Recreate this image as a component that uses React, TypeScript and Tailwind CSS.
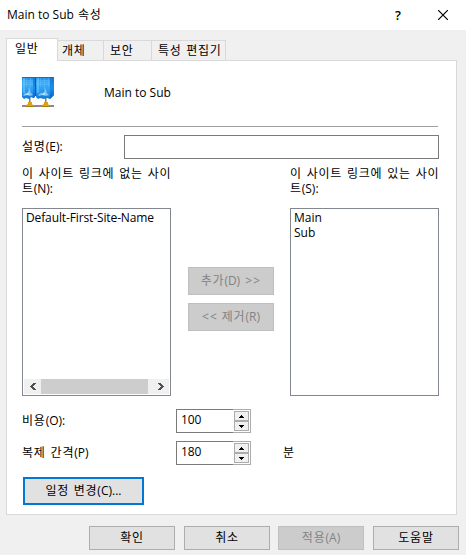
import type { ReactNode } from 'react';

function DialogButton({ children, className = '', disabled = false }: { children: ReactNode; className?: string; disabled?: boolean }) {
  return (
    <button
      disabled={disabled}
      className={`flex shrink-0 items-center justify-center whitespace-nowrap border ${
        disabled ? 'border-[#bfbfbf] bg-[#cccccc] text-[#838383]' : 'border-[#adadad] bg-[#e1e1e1] text-black'
      } ${className}`}
    >
      {children}
    </button>
  );
}

function SpinButton({ down = false }: { down?: boolean }) {
  return (
    <button className="flex h-[10px] w-[15px] items-center justify-center border border-[#acacac] bg-[#f0f0f0]">
      <svg width="5" height="3" viewBox="0 0 5 3" shapeRendering="crispEdges">
        <path d={down ? 'M0 0h5v1h-1v1h-1v1h-1v-1h-1v-1h-1z' : 'M0 3h5v-1h-1v-1h-1v-1h-1v1h-1v1h-1z'} fill="#000" />
      </svg>
    </button>
  );
}

function Spinner({ value }: { value: string }) {
  return (
    <div className="flex h-6 w-[75px] shrink-0 border border-[#7a7a7a]">
      <span className="w-[57px] pl-[4px] leading-[20px] tracking-[-0.1px]">{value}</span>
      <div className="-my-px -mr-px flex w-[18px] flex-col border border-l-0 border-[#acacac] bg-white py-px pl-px">
        <SpinButton />
        <SpinButton down />
      </div>
    </div>
  );
}

function SiteLinkIcon() {
  return (
    <svg className="shrink-0" width="32" height="31" viewBox="0 0 32 31">
      <defs>
        <linearGradient id="front" x1="0" y1="0" x2="0" y2="1">
          <stop offset="0" stopColor="#1c86e0" />
          <stop offset=".25" stopColor="#3fb0fa" />
          <stop offset=".6" stopColor="#2d9df2" />
          <stop offset="1" stopColor="#0b78d8" />
        </linearGradient>
        <linearGradient id="side" x1="0" y1="0" x2="0" y2="1">
          <stop offset="0" stopColor="#1676d4" />
          <stop offset=".5" stopColor="#1f8ceb" />
          <stop offset="1" stopColor="#0a5fc0" />
        </linearGradient>
      </defs>
      <rect x="0" y="28" width="32" height="2" fill="#8a8a8a" />
      <rect x="7" y="19" width="1.5" height="7" fill="#7f7f7f" />
      <rect x="23" y="19" width="1.5" height="7" fill="#7f7f7f" />
      <path d="M6 25h4v2l1 1v2H4v-2l2-1zM22 25h4v2l1 1v2h-7v-2l2-1z" fill="#dca217" />
      <path d="M4 29h7v1H4zM20 29h7v1h-7z" fill="#a97a14" />
      <path d="M0 0h13v20l-2 1-2-1-2 2-3-1-2 1-2-2z" fill="url(#front)" />
      <path d="M14 0h18v18l-2 2-2 2-3-1-3 1-4-1-2 1-2-2z" fill="url(#front)" />
      <path d="M11 0h2v20l-2 1zM28 0h4v18l-2 2-2 2z" fill="url(#side)" />
      <path d="M13 0h1v19h-1z" fill="#0c5ab0" />
      <path d="M0 0h32v1H0z" fill="#1470c6" />
      <path d="M1 3.5h10M1 7.5h10M15 3.5h13M15 7.5h13M4.5 1v9M8.5 1v9M18.500 1v9M22.500 1v9M26.500 1v9" stroke="#7bd0ff" strokeWidth=".8" opacity=".35" />
      <path d="M1 1h2v15H1zM15 1h2v15h-2z" fill="#6cc8ff" opacity=".6" />
      <path d="M7 10l1 3 1 3 2 2-3 1-3-1-3 1-1-1 3-3zM23 10l1 3 1 3 2 2-3 1-4-1-3 1-1-1 4-3z" fill="#86d2fc" opacity=".8" />
      <path d="M7 11l-1 4-3 2 2-4zM23 11l-1 4-3 2 2-4z" fill="#1673cc" opacity=".7" />
      <path d="M3 18l3-2 2 1-2 1zM19 18l3-2 2 1-2 1z" fill="#d3f0ff" opacity=".8" />
    </svg>
  );
}

function Chevron({ right = false }: { right?: boolean }) {
  return (
    <svg width="6" height="7" viewBox="0 0 6 7" shapeRendering="crispEdges">
      <path
        d="M3 0h3v1H5v1H4v1H3v1h1v1h1v1h1v1H3V6H2V5H1V4H0V3h1V2h1V1h1z"
        transform={right ? 'translate(6 0) scale(-1 1)' : undefined}
        fill="#505050"
      />
    </svg>
  );
}

export default function App() {
  return (
    <div className="flex h-[555px] w-[466px] flex-col overflow-hidden bg-[#f0f0f0] font-['Open_Sans','Noto_Sans_CJK_KR',sans-serif] text-[12px] leading-[15px] text-black">
      <header className="flex h-[30px] shrink-0 items-center bg-white pl-[7px]">
        <span className="w-[388px] whitespace-nowrap leading-[28px]">Main to Sub <span className="ml-px tracking-[0.8px]">속성</span></span>
        <span className="w-[43px] text-[13px] font-semibold leading-[28px]">?</span>
        <svg width="10" height="10" viewBox="0 0 10 10">
          <path d="M0 0l10 10M10 0L0 10" stroke="#000" strokeWidth="1.2" />
        </svg>
      </header>

      <nav className="ml-[6px] mt-2 flex h-[23px] shrink-0 items-end whitespace-nowrap tracking-[0.7px]">
        <div className="z-10 h-[23px] w-[52px] border border-b-0 border-[#d9d9d9] bg-white pl-2 leading-[20px]">일반</div>
        <div className="h-[21px] w-[46px] border border-l-0 border-[#d9d9d9] pl-[4px] leading-[19px]">개체</div>
        <div className="h-[21px] w-[48px] border border-l-0 border-[#d9d9d9] pl-[6px] leading-[19px]">보안</div>
        <div className="h-[21px] w-[74px] border border-l-0 border-[#d9d9d9] pl-[6px] leading-[19px] [word-spacing:1px]">특성 편집기</div>
      </nav>

      <main className="-mt-px ml-[6px] flex h-[455px] w-[451px] shrink-0 flex-col border border-[#d9d9d9] bg-white pl-[15px]">
        <div className="flex h-[65px] items-start pt-4">
          <SiteLinkIcon />
          <span className="ml-[50px] mt-2">Main to Sub</span>
        </div>
        <div className="h-px w-[416px] shrink-0 bg-[#a0a0a0]" />
        <div className="mt-2 flex h-6 shrink-0">
          <label className="w-[102px] pt-1"><span className="tracking-[0.8px]">설명</span>(E):</label>
          <input className="h-6 w-[315px] border border-[#7a7a7a] bg-white outline-none" />
        </div>

        <div className="mt-[7px] flex h-[230px] shrink-0">
          <section className="w-[149px]">
            <h2 className="h-[42px] whitespace-nowrap tracking-[0.7px] [word-spacing:1.2px]">이 사이트 링크에 없는 사이<br />트<span className="tracking-normal">(N):</span></h2>
            <div className="flex h-[188px] flex-col justify-between border border-[#828790] p-px">
              <span className="pl-[2px] tracking-[-0.12px]">Default-First-Site-Name</span>
              <div className="flex h-[15px] bg-[#f0f0f0]">
                <div className="flex w-[17px] items-center justify-center"><Chevron /></div>
                <div className="w-[107px] bg-[#cdcdcd]" />
                <div className="flex flex-1 items-center justify-center pl-1"><Chevron right /></div>
              </div>
            </div>
          </section>
          <div className="ml-[17px] mr-4 flex w-[86px] flex-col gap-2 pt-[101px]">
            <DialogButton disabled className="h-7 pb-px"><span className="tracking-[0.8px]">추가</span>(D)<span className="ml-[5px] tracking-[1.2px]">&gt;&gt;</span></DialogButton>
            <DialogButton disabled className="h-7 pb-px"><span className="mr-[4px] tracking-[1px]">&lt;&lt;</span><span className="tracking-[0.8px]">제거</span>(R)</DialogButton>
          </div>
          <section className="w-[149px]">
            <h2 className="h-[42px] whitespace-nowrap tracking-[0.7px] [word-spacing:1.2px]">이 사이트 링크에 있는 사이<br />트<span className="tracking-normal">(S):</span></h2>
            <div className="flex h-[188px] flex-col border border-[#828790] pl-[3px] pt-px">
              <span>Main</span>
              <span>Sub</span>
            </div>
          </section>
        </div>

        <div className="mt-[13px] flex h-6 shrink-0">
          <label className="w-[154px] pt-1"><span className="tracking-[0.8px]">비용</span>(O):</label>
          <Spinner value="100" />
        </div>
        <div className="mt-2 flex h-6 shrink-0">
          <label className="w-[154px] pt-1"><span className="tracking-[0.8px] [word-spacing:1px]">복제 간격</span>(P)</label>
          <Spinner value="180" />
          <span className="ml-[32px] pt-1">분</span>
        </div>
        <button className="ml-px mt-3 h-7 w-[121px] shrink-0 border-2 border-[#0078d7] bg-[#e1e1e1] pb-px"><span className="tracking-[0.7px] [word-spacing:1px]">일정 변경</span>(C)...</button>
      </main>

      <footer className="ml-[89px] mt-[11px] flex h-6 shrink-0">
        <DialogButton className="h-6 w-[86px] pb-px tracking-[0.6px]">확인</DialogButton>
        <DialogButton className="ml-[9px] h-6 w-[86px] pb-px tracking-[0.6px]">취소</DialogButton>
        <DialogButton disabled className="ml-2 h-6 w-[86px] pb-px"><span className="tracking-[0.8px]">적용</span>(A)</DialogButton>
        <DialogButton className="ml-[9px] h-6 w-[86px] pb-px tracking-[0.8px]">도움말</DialogButton>
      </footer>
    </div>
  );
}
